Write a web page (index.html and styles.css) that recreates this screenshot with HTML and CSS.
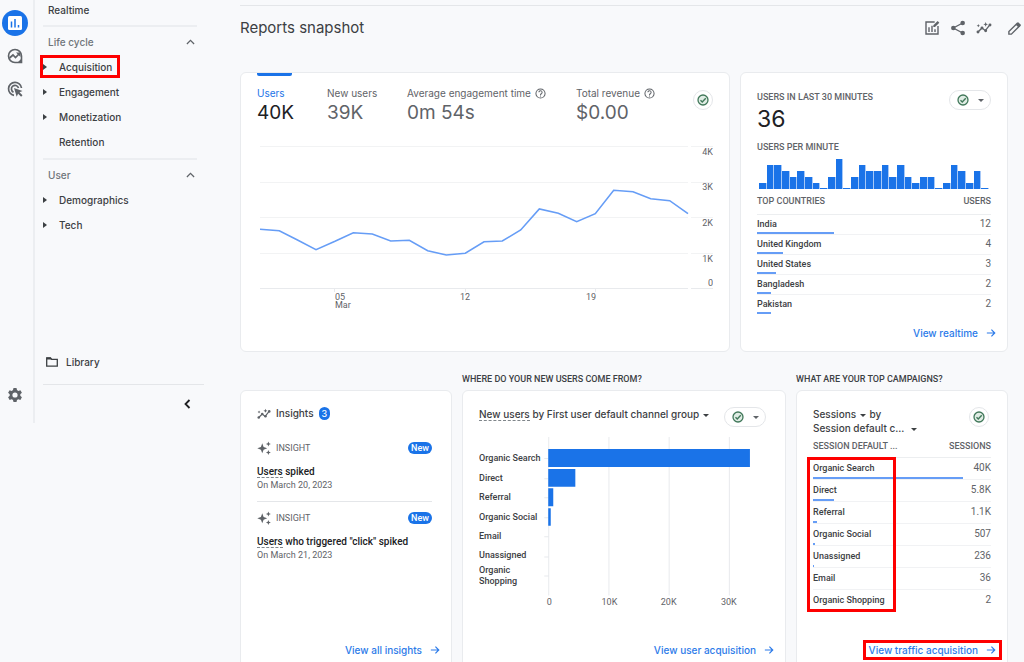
FILE: index.html
```
<!DOCTYPE html>
<html lang="en">
<head>
<meta charset="utf-8">
<title>Reports snapshot</title>
<link rel="stylesheet" href="styles.css">
</head>
<body>
<svg class="defs" aria-hidden="true">
  <symbol id="check" viewBox="0 0 24 24"><circle cx="12" cy="12" r="10" fill="#dfece4" stroke="#41785a" stroke-width="2.6"/><path d="M7 12.5l3.500 3.500 7-7.500" fill="none" stroke="#41785a" stroke-width="2.800"/></symbol>
  <symbol id="arrow" viewBox="0 0 24 24"><path d="M2 12h19M13 4l8 8-8 8" fill="none" stroke="currentColor" stroke-width="2.800"/></symbol>
  <symbol id="help" viewBox="0 0 24 24"><circle cx="12" cy="12" r="10" fill="none" stroke="currentColor" stroke-width="2.200"/><path d="M8.500 9.500a3.500 3.500 0 1 1 5.500 2.800c-1.300 1-2 1.400-2 2.700M12 16.500v2.200" fill="none" stroke="currentColor" stroke-width="2.200"/></symbol>
  <symbol id="trend" viewBox="0 0 24 24"><path d="M3 18l6-6 5 4 7-9" fill="none" stroke="currentColor" stroke-width="2"/><circle cx="3" cy="18" r="2.200"/><circle cx="9" cy="12" r="2.200"/><circle cx="14.500" cy="16" r="2.200"/><circle cx="21" cy="7.500" r="2.200"/><path d="M14.500 3l1 2.500 2.500 1-2.500 1-1 2.500-1-2.500-2.500-1 2.500-1zM3.500 6l.8 1.700 1.700.8-1.700.8-.8 1.700-.8-1.700L1 8.500l1.700-.8z"/></symbol>
  <symbol id="spark" viewBox="0 0 24 24"><path d="M9 4l2.300 6.200L17.500 12.500l-6.200 2.300L9 21l-2.300-6.200L.5 12.500l6.200-2.300zM19.500 1l1.200 3 3 1.200-3 1.200-1.200 3-1.200-3-3-1.200 3-1.200zM19.500 15.500l1.200 3 3 1.200-3 1.200-1.200 3-1.200-3-3-1.200 3-1.200z"/></symbol>
  <symbol id="up" viewBox="0 0 10 6"><path d="M1 5.200l4-4 4 4" fill="none" stroke="#5f6368" stroke-width="1.400"/></symbol>
  <symbol id="down" viewBox="0 0 8 4"><path d="M0 0h8L4 4z"/></symbol>
  <symbol id="right" viewBox="0 0 4 6"><path d="M0 0v6l4-3z"/></symbol>
</svg>
<div class="app">
  <nav class="rail" aria-label="Workspaces">
    <button class="rail-btn active" aria-label="Reports"><svg viewBox="0 0 26 26"><rect x="6" y="6" width="14" height="14" rx="1.500" fill="#fff"/><path d="M9.500 11.500v6M13 9v8.500M16.500 15v2.500" stroke="#1a73e8" stroke-width="1.500"/></svg></button>
    <button class="rail-btn" aria-label="Explore"><svg viewBox="0 0 26 26"><path d="M13 6.500a6.500 6.500 0 1 0 0 13h6.500V13A6.500 6.500 0 0 0 13 6.500z" fill="none" stroke="#5f6368" stroke-width="1.600"/><path d="M7.500 15l3.500-3 2.500 2.500 4-4" fill="none" stroke="#5f6368" stroke-width="1.700"/><path d="M14 9.500h4.500V14zM20 15v5h-5z" fill="#5f6368"/></svg></button>
    <button class="rail-btn" aria-label="Advertising"><svg viewBox="0 0 26 26"><path d="M12 19.300A6.500 6.500 0 1 1 19.500 12M11.500 16.200a3.600 3.600 0 1 1 5-4.200" fill="none" stroke="#5f6368" stroke-width="1.700"/><path d="M12 12l8.500 3-3 1.300 3 3-1.400 1.400-3-3-1.400 3z" fill="#5f6368"/></svg></button>
    <button class="rail-btn settings" aria-label="Admin"><svg viewBox="0 0 26 26"><path d="M11.500 6h3l.5 2.100 1.300.8 2.100-.7 1.500 2.600-1.600 1.500v1.500l1.600 1.500-1.500 2.600-2.100-.7-1.300.8-.5 2.100h-3l-.5-2.100-1.300-.8-2.100.7-1.500-2.600 1.600-1.500v-1.500l-1.600-1.500 1.500-2.600 2.100.7 1.300-.8z" fill="#5f6368"/><circle cx="13" cy="13" r="2.600" fill="#f8f9fb"/></svg></button>
  </nav>
  <nav class="side" aria-label="Reports">
    <a class="side-top" href="#">Realtime</a>
    <section class="group">
      <button class="group-head">Life cycle<svg class="up"><use href="#up"/></svg></button>
      <a class="item marked" href="#"><svg class="right"><use href="#right"/></svg>Acquisition</a>
      <a class="item" href="#"><svg class="right"><use href="#right"/></svg>Engagement</a>
      <a class="item" href="#"><svg class="right"><use href="#right"/></svg>Monetization</a>
      <a class="item" href="#"><span class="right"></span>Retention</a>
    </section>
    <section class="group">
      <button class="group-head">User<svg class="up"><use href="#up"/></svg></button>
      <a class="item" href="#"><svg class="right"><use href="#right"/></svg>Demographics</a>
      <a class="item" href="#"><svg class="right"><use href="#right"/></svg>Tech</a>
    </section>
    <div class="side-foot">
      <a class="library" href="#"><svg viewBox="0 0 12 10"><path d="M.7 9.200V1h3.800l1.200 1.400h5.600v6.800z" fill="none" stroke="#3c4043" stroke-width="1.300"/><path d="M.5.5h4.200l1.300 2H.5z" fill="#3c4043"/></svg>Library</a>
      <button class="collapse" aria-label="Collapse"><svg viewBox="0 0 8 10"><path d="M6.500 1l-4 4 4 4" fill="none" stroke="#202124" stroke-width="1.800"/></svg></button>
    </div>
  </nav>
  <main class="main">
    <header class="head">
      <h1>Reports snapshot</h1>
      <div class="tools">
        <button aria-label="Customize report"><svg viewBox="0 0 24 24"><path d="M16 3H3v18h18V9M7.500 11v7M12 8.500V18M16.500 14v4" fill="none" stroke="currentColor" stroke-width="2.100"/><path d="M14 10.500V8l6.500-6.500L23 4l-6.500 6.500z"/></svg></button>
        <button aria-label="Share"><svg viewBox="0 0 24 24"><path d="M19 4.500L5 12l14 7.500" fill="none" stroke="currentColor" stroke-width="2"/><circle cx="19" cy="4.500" r="3.400"/><circle cx="5" cy="12" r="3.400"/><circle cx="19" cy="19.500" r="3.400"/></svg></button>
        <button aria-label="Insights"><svg><use href="#trend"/></svg></button>
        <button class="edit" aria-label="Edit"><svg viewBox="0 0 24 24"><path d="M3 21v-4L16.500 3.500l4 4L7 21z" fill="none" stroke="currentColor" stroke-width="2.200"/><path d="M14 6l4-4 4.500 4.500-4 4z"/></svg></button>
      </div>
    </header>
    <div class="row row-top">
      <article class="card overview">
        <div class="metrics">
          <button class="metric selected"><span class="name">Users</span><span class="value">40K</span></button>
          <button class="metric"><span class="name">New users</span><span class="value">39K</span></button>
          <button class="metric"><span class="name">Average engagement time <svg class="help"><use href="#help"/></svg></span><span class="value">0m 54s</span></button>
          <button class="metric"><span class="name">Total revenue <svg class="help"><use href="#help"/></svg></span><span class="value">$0.00</span></button>
          <button class="status" aria-label="Data quality"><svg class="check"><use href="#check"/></svg></button>
        </div>
        <svg class="line-chart" viewBox="0 0 456 172" role="img" aria-label="Users over time">
          <path class="grid" d="M3 6.500h428M434 6.500h22M3 42.500h428M434 42.500h22M3 77.500h428M434 77.500h22M3 113.500h428M434 113.500h22"/>
          <path class="axis" d="M3 148.500h428M434 148.500h22M77.500 149v3M208.500 149v3M338.500 149v3"/>
          <polyline class="series" points="3,89.300 22.300,90.700 40,99.700 59,109.700 78,101.300 96.300,92.700 115.300,94 133.700,101 152.300,100.300 170.700,110.700 189.300,115 208.300,113.300 227,101.700 245.300,101 263.700,90 282.300,69 301.300,73.300 319.700,81.700 338.300,73.700 356.700,50.300 376,51.700 393.700,58.700 412.700,60.700 431,73.700"/>
          <g class="tick end"><text x="456" y="15">4K</text><text x="456" y="50">3K</text><text x="456" y="86">2K</text><text x="456" y="122">1K</text><text x="456" y="146">0</text></g>
          <g class="tick"><text x="78" y="160">05</text><text x="78" y="168">Mar</text></g>
          <g class="tick end"><text x="213" y="160">12</text><text x="339" y="160">19</text></g>
        </svg>
      </article>
      <article class="card realtime">
        <div class="rt-head">
          <div><h2 class="caps">USERS IN LAST 30 MINUTES</h2><p class="big">36</p></div>
          <button class="pill" aria-label="Data quality"><svg class="check"><use href="#check"/></svg><svg class="down"><use href="#down"/></svg></button>
        </div>
        <h2 class="caps">USERS PER MINUTE</h2>
        <div class="minutes" id="minutes"></div>
        <table class="data">
          <thead><tr><th>TOP COUNTRIES</th><th>USERS</th></tr></thead>
          <tbody>
            <tr><td>India<i class="bar" style="width:33%"></i></td><td>12</td></tr>
            <tr><td>United Kingdom<i class="bar" style="width:11%"></i></td><td>4</td></tr>
            <tr><td>United States<i class="bar" style="width:8%"></i></td><td>3</td></tr>
            <tr><td>Bangladesh<i class="bar" style="width:6%"></i></td><td>2</td></tr>
            <tr><td>Pakistan<i class="bar" style="width:6%"></i></td><td>2</td></tr>
          </tbody>
        </table>
        <a class="more" href="#">View realtime<svg><use href="#arrow"/></svg></a>
      </article>
    </div>
    <div class="row row-bottom">
      <section class="column">
        <div class="question"></div>
        <article class="card insights">
          <h3 class="ins-title"><svg><use href="#trend"/></svg>Insights<span class="count">3</span></h3>
          <div class="insight">
            <div class="ins-kind"><svg><use href="#spark"/></svg>INSIGHT<span class="new">New</span></div>
            <p class="ins-text"><span class="term">Users</span> spiked</p>
            <p class="ins-date">On March 20, 2023</p>
          </div>
          <div class="insight">
            <div class="ins-kind"><svg><use href="#spark"/></svg>INSIGHT<span class="new">New</span></div>
            <p class="ins-text"><span class="term">Users</span> who triggered "click" spiked</p>
            <p class="ins-date">On March 21, 2023</p>
          </div>
          <a class="more" href="#">View all insights<svg><use href="#arrow"/></svg></a>
        </article>
      </section>
      <section class="column">
        <h2 class="question">WHERE DO YOUR NEW USERS COME FROM?</h2>
        <article class="card channels">
          <div class="card-head">
            <button class="picker"><span class="term">New users</span> by First user default channel group <svg class="down"><use href="#down"/></svg></button>
            <button class="pill" aria-label="Data quality"><svg class="check"><use href="#check"/></svg><svg class="down"><use href="#down"/></svg></button>
          </div>
          <svg class="bar-chart" viewBox="0 0 289 172" role="img" aria-label="New users by channel group">
            <path class="rule" d="M69.500 2v158M129.500 2v158M189.500 2v158M249.500 2v158M65 23.500h5M65 43.500h5M65 62.500h5M65 82.500h5M65 101.500h5M65 121.500h5M65 140.500h5"/>
            <path class="bars" d="M69 14h201v18H69zM69 34h27v17.500H69zM69 53h5v18h-5zM69 73h2.500v17.500H69z"/>
            <g class="cat"><text x="0" y="26">Organic Search</text><text x="0" y="46">Direct</text><text x="0" y="65">Referral</text><text x="0" y="85">Organic Social</text><text x="0" y="104">Email</text><text x="0" y="123">Unassigned</text><text x="0" y="138">Organic</text><text x="0" y="148">Shopping</text></g>
            <g class="tick mid"><text x="70" y="169">0</text><text x="130" y="169">10K</text><text x="189" y="169">20K</text><text x="249" y="169">30K</text></g>
          </svg>
          <a class="more" href="#">View user acquisition<svg><use href="#arrow"/></svg></a>
        </article>
      </section>
      <section class="column">
        <h2 class="question">WHAT ARE YOUR TOP CAMPAIGNS?</h2>
        <article class="card campaigns">
          <div class="card-head">
            <div class="pickers">
              <div><button class="picker">Sessions <svg class="down"><use href="#down"/></svg></button> by</div>
              <button class="picker">Session default c... <svg class="down wide"><use href="#down"/></svg></button>
            </div>
            <button class="status" aria-label="Data quality"><svg class="check"><use href="#check"/></svg></button>
          </div>
          <div class="table-wrap">
            <table class="data">
              <thead><tr><th>SESSION DEFAULT ...</th><th>SESSIONS</th></tr></thead>
              <tbody>
                <tr><td>Organic Search<i class="bar" style="width:84%"></i></td><td>40K</td></tr>
                <tr><td>Direct<i class="bar" style="width:12%"></i></td><td>5.8K</td></tr>
                <tr><td>Referral<i class="bar" style="width:2%"></i></td><td>1.1K</td></tr>
                <tr><td>Organic Social<i class="bar" style="width:1%"></i></td><td>507</td></tr>
                <tr><td>Unassigned<i class="bar" style="width:1px"></i></td><td>236</td></tr>
                <tr><td>Email</td><td>36</td></tr>
                <tr><td>Organic Shopping</td><td>2</td></tr>
              </tbody>
            </table>
            <div class="highlight"></div>
          </div>
          <a class="more marked" href="#">View traffic acquisition<svg><use href="#arrow"/></svg></a>
        </article>
      </section>
    </div>
  </main>
</div>
<script src="chart.js"></script>
</body>
</html>
```

FILE: styles.css
```
* { box-sizing: border-box; }
body { margin: 0; background: #f8f9fb; color: #3c4043; font: 400 9px/12px Roboto, sans-serif; }
h1, h2, h3, p { margin: 0; font-weight: 400; }
button { margin: 0; padding: 0; border: 0; background: none; color: inherit; font: inherit; text-align: left; cursor: pointer; }
a { color: inherit; text-decoration: none; }
svg { display: block; flex: none; fill: currentColor; }
.defs { position: absolute; width: 0; height: 0; }

.app { display: flex; height: 100vh; min-height: 662px; overflow: hidden; }

.rail { display: flex; flex-direction: column; align-items: center; gap: 7px; width: 35px; height: 423px; padding: 10px 3px 15px 0; border-right: 2px solid #eceef1; }
.rail-btn { width: 26px; height: 26px; border-radius: 50%; }
.rail-btn svg { width: 26px; height: 26px; }
.rail-btn.active { background: #1a73e8; }
.rail-btn.settings { margin-top: auto; }

.side { display: flex; flex-direction: column; width: 169px; height: 423px; padding-left: 8px; font: 500 10px/14px Inter, sans-serif; }
.side-top { padding: 3px 5px 8px; }
.group { width: 154px; padding: 2px 0 4px; border-top: 2px solid #eceef1; }
.group-head { display: flex; align-items: center; justify-content: space-between; width: 100%; height: 25px; padding: 0 2px 0 5px; color: #70757a; }
.up { width: 9px; height: 6px; }
.item { display: flex; align-items: center; gap: 12px; width: max-content; height: 25px; padding-right: 5px; }
.item .right { width: 4px; height: 6px; }
.marked { outline: 3px solid #fe0000; }
.item.marked { height: 17px; margin: 4px 0; }
.side-foot { margin-top: auto; }
.library { display: flex; align-items: center; gap: 8px; padding: 0 3px 15px; border-bottom: 1px solid #e4e6e9; }
.library svg { width: 12px; height: 10px; }
.collapse { display: block; margin: 14px 13px 14px auto; }
.collapse svg { width: 8px; height: 10px; }

.main { display: flex; flex: 1; flex-direction: column; min-width: 0; padding: 5px 0 0 36px; }
.head { display: flex; flex: none; align-items: center; justify-content: space-between; height: 67px; padding: 0 2px 22px 0; border-top: 1px solid #e4e6e9; }
h1 { font: 400 15px/20px Inter, sans-serif; }
.tools { display: flex; align-items: center; gap: 10px; color: #5f6368; }
.tools svg { width: 16px; height: 16px; }
.tools .edit { margin-left: 5px; }
.tools .edit svg { width: 15px; height: 15px; }

.row { display: grid; flex: none; gap: 10px; padding-right: 16px; }
.row-top { grid-template-columns: minmax(0, 490fr) minmax(0, 268fr); }
.row-bottom { grid-template-columns: minmax(0, 212fr) minmax(0, 324fr) minmax(0, 212fr); padding-top: 21px; }
.column { display: flex; flex-direction: column; min-width: 0; }
.question { height: 17px; font-size: 9px; line-height: 12px; font-weight: 500; white-space: nowrap; }
.card { display: flex; flex-direction: column; min-width: 0; padding: 0 16px; border: 1px solid #e9ebee; border-radius: 6px; background: #fff; }
.row-top .card { height: 280px; padding-bottom: 11px; }
.row-bottom .card { height: 300px; padding-bottom: 32px; }

.metrics { display: grid; grid-template-columns: 70px 80px 169px auto 1fr; height: 67px; }
.metric { display: flex; flex-direction: column; align-items: flex-start; color: #5f6368; white-space: nowrap; }
.metric::before { content: ""; width: 35px; height: 3px; }
.metric.selected::before { border-radius: 0 0 2px 2px; background: #1a73e8; }
.metric .name { display: flex; align-items: center; gap: 4px; height: 14px; margin-top: 10px; font: 400 10px/14px Inter, sans-serif; }
.metric .value { font: 400 19px/25px Inter, sans-serif; }
.metric.selected .name { color: #1a73e8; }
.metric.selected .value { color: #202124; }
.help { width: 11px; height: 11px; }
.status, .pill { display: flex; align-items: center; justify-content: center; flex: none; height: 20px; border: 1px solid #e4e6e9; border-radius: 10px; color: #5f6368; }
.status { width: 20px; }
.pill { gap: 9px; width: 42px; }
.metrics .status { margin: 17px 0 0 auto; }
.check { width: 12px; height: 12px; }
.down { width: 6px; height: 3px; }

.line-chart, .bar-chart { width: 100%; height: auto; }
.grid, .axis, .rule { fill: none; stroke: #f2f3f4; }
.axis, .rule { stroke: #e8eaed; }
.series { fill: none; stroke: #669df6; stroke-width: 1.6; }
.tick { fill: #5f6368; font-size: 9px; }
.end { text-anchor: end; }
.mid { text-anchor: middle; }
.bars { fill: #1a73e8; }
.cat { fill: #3c4043; font-size: 9px; font-weight: 500; }

.caps { color: #5f6368; font: 500 9px/12px Roboto, sans-serif; white-space: nowrap; }
.rt-head { display: flex; justify-content: space-between; height: 68px; padding-top: 18px; }
.rt-head .pill { margin-top: -1px; }
.big { color: #202124; font: 400 23px/32px Inter, sans-serif; }
.minutes { display: flex; align-items: flex-end; height: 36px; padding: 0 2px; }
.minutes i { flex: 1; border-right: 1px solid #a6c8f7; background: #1a73e8; }

.data { width: 100%; border-collapse: collapse; }
.data th { height: 25px; padding: 0; border-bottom: 1px solid #eceef0; color: #5f6368; font-weight: 500; text-align: left; white-space: nowrap; }
.data th:last-child, .data td:last-child { text-align: right; }
.data tr { position: relative; }
.data td { height: 20px; padding: 0; border-bottom: 1px solid #f1f2f4; color: #5f6368; }
.data td:first-child { color: #3c4043; font-weight: 500; }
.data td:last-child { font-size: 10px; }
.data tbody tr:last-child td { border-bottom: 0; }
.bar { position: absolute; bottom: 0; left: 0; height: 2px; background: #669df6; }

.more { display: flex; align-items: center; align-self: flex-end; gap: 8px; margin: auto -5px 0 0; color: #2c7be9; font: 500 10px/14px Inter, sans-serif; white-space: nowrap; }
.more svg { width: 10px; height: 10px; }

.ins-title { display: flex; align-items: center; gap: 5px; margin-top: 15px; font: 500 10px/15px Inter, sans-serif; }
.ins-title svg, .ins-kind svg { width: 14px; height: 14px; color: #5f6368; }
.count { padding: 0 3px; border-radius: 7px; background: #1a73e8; color: #fff; font-size: 9px; line-height: 13px; }
.insight { width: 175px; padding: 20px 0 10px; }
.insight + .insight { padding-top: 9px; border-top: 1px solid #e4e6e9; }
.ins-kind { display: flex; align-items: center; gap: 5px; color: #5f6368; }
.new { margin-left: auto; padding: 0 3px; border-radius: 6px; background: #1a73e8; color: #fff; font-weight: 500; }
.ins-text { margin-top: 9px; color: #202124; font-size: 10px; line-height: 15px; font-weight: 500; white-space: nowrap; }
.term { border-bottom: 1px dashed #80868b; }
.ins-date { color: #5f6368; }

.card-head { display: flex; justify-content: space-between; padding-top: 16px; font: 500 10px/14px Inter, sans-serif; }
.picker { white-space: nowrap; }
.picker .down { display: inline-block; margin: 0 1px; vertical-align: middle; }
.picker .wide { margin-left: 4px; }
.channels .card-head { height: 44px; margin-right: 3px; }
.channels .picker { align-self: flex-start; }
.campaigns .data th { height: 22px; }
.campaigns .data td { height: 22px; }
.campaigns .status { margin-right: 2px; }
.table-wrap { position: relative; }
.highlight { position: absolute; top: 22px; bottom: -1px; left: -6px; width: 89px; border: 3px solid #fe0000; }
.more.marked { padding: 0 3px; margin-right: -8px; }
```

FILE: chart.js
```
const usersPerMinute = [1, 4, 4, 3, 2, 3, 2, 1, 0, 2, 5, 0, 2, 4, 3, 3, 4, 2, 4, 2, 1, 2, 2, 0, 1, 4, 3, 1, 3, 0];
const minutes = document.getElementById("minutes");
for (const users of usersPerMinute) {
  const bar = document.createElement("i");
  bar.style.height = Math.max(1, users * 6) + "px";
  minutes.append(bar);
}
```
